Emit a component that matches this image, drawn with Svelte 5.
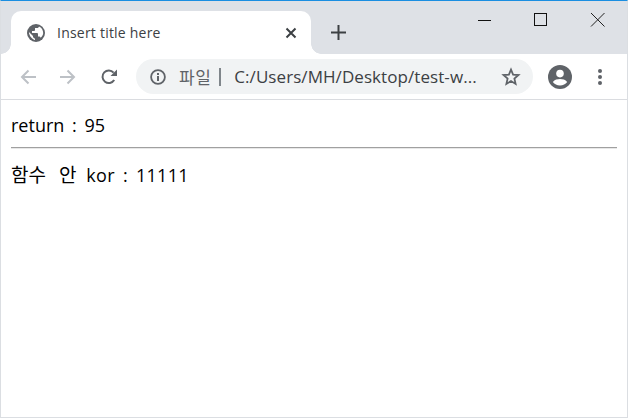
<script lang="ts">
	const url = 'C:/Users/MH/Desktop/test-w...';
</script>

<div class="window">
	<header class="titlebar">
		<div class="tab">
			<svg class="globe" viewBox="0 0 18 18" width="18" height="18">
				<circle cx="9" cy="9" r="9" fill="#5f6368" />
				<path d="M8 16 C5.5 15.5 2 12 1.9 8 L6 12 L6 13 C6 14 8 14 8 15 Z M13.6 13.8 C13.4 13.1 12.8 12.6 12 12.6 L11 12.6 L11 10 C11 9.5 10.5 9 10 9 L5 9 L5 7 L7 7 C7.5 7 8 6.5 8 6 L8 4 L10 4 C11 4 12 3 12 2.4 C14.5 3.4 16.2 6 16.2 9 C16.2 10.8 15.2 12.6 13.6 13.8 Z" fill="#fff" />
			</svg>
			<span class="tab-title">Insert title here</span>
			<svg class="tab-close" viewBox="0 0 12 12" width="12" height="12">
				<path d="M1.5 1.5 L10.5 10.5 M10.5 1.5 L1.5 10.5" stroke="#3c4043" stroke-width="2" fill="none" />
			</svg>
		</div>
		<svg class="new-tab" viewBox="0 0 15 15" width="15" height="15">
			<path d="M7.5 0 V15 M0 7.5 H15" stroke="#3c4043" stroke-width="2" fill="none" />
		</svg>
		<div class="win-controls">
			<svg viewBox="0 0 46 20" width="46" height="20"><path d="M17 10.5 H30" stroke="#111" fill="none" /></svg>
			<svg viewBox="0 0 46 20" width="46" height="20"><rect x="16.5" y="3.5" width="12" height="12" stroke="#111" fill="none" /></svg>
			<svg viewBox="0 0 46 20" width="46" height="20"><path d="M16 3 L29.5 16.5 M29.5 3 L16 16.5" stroke="#222" fill="none" /></svg>
		</div>
	</header>

	<nav class="toolbar">
		<svg class="nav-icon back" viewBox="0 0 16 16" width="16" height="16">
			<path d="M16 8 H2 M8.5 1.5 L2 8 L8.5 14.5" stroke="#bdc1c6" stroke-width="2" fill="none" />
		</svg>
		<svg class="nav-icon forward" viewBox="0 0 16 16" width="16" height="16">
			<path d="M0 8 H14 M7.5 1.5 L14 8 L7.5 14.5" stroke="#bdc1c6" stroke-width="2" fill="none" />
		</svg>
		<svg class="nav-icon reload" viewBox="0 0 16 16" width="16" height="16">
			<path d="M13.2 11 A6.3 6.3 0 1 1 12.6 3.6" stroke="#5f6368" stroke-width="2" fill="none" />
			<path d="M16 0.5 V7 H9.5 Z" fill="#5f6368" />
		</svg>
		<div class="omnibox">
			<svg class="info" viewBox="0 0 16 16" width="16" height="16">
				<circle cx="8" cy="8" r="6.9" stroke="#5f6368" stroke-width="1.8" fill="none" />
				<path d="M7 7 H9 V12 H7 Z M7 4 H9 V6 H7 Z" fill="#5f6368" />
			</svg>
			<span class="scheme">파일</span>
			<span class="divider"></span>
			<span class="url">{url}</span>
			<svg class="star" viewBox="0 0 20 20" width="20" height="20">
				<path d="M10 2.6 L12.1 7.6 L17.5 8 L13.4 11.6 L14.6 16.9 L10 14.1 L5.4 16.9 L6.6 11.6 L2.5 8 L7.9 7.6 Z" stroke="#5f6368" stroke-width="1.8" fill="none" />
			</svg>
		</div>
		<svg class="avatar" viewBox="0 0 24 24" width="24" height="24">
			<circle cx="12" cy="12" r="12" fill="#5f6368" />
			<circle cx="12" cy="8.6" r="3.8" fill="#fff" />
			<path d="M4.8 17 C6.5 14.6 9.5 14 12 14 C14.5 14 17.5 14.6 19.2 17 C17.5 19.2 15 20.4 12 20.4 C9 20.4 6.5 19.2 4.8 17 Z" fill="#fff" />
		</svg>
		<div class="menu"><i></i><i></i><i></i></div>
	</nav>

	<main class="page">
		<p class="first">return : 95</p>
		<hr />
		<p class="second"><span class="ko">함수 안</span> kor : 11111</p>
	</main>
</div>

<style>
	:global(body) {
		margin: 0;
		background: #fff;
	}

	.window {
		width: 628px;
		height: 418px;
		box-sizing: border-box;
		border: 1px solid #dbdee2;
		border-top: 1px solid #1a8ee1;
		display: flex;
		flex-direction: column;
		overflow: hidden;
		font-family: "Open Sans", "Noto Sans CJK KR", sans-serif;
	}

	.titlebar {
		height: 53px;
		flex: none;
		background: #dee1e6;
		display: flex;
		align-items: flex-end;
		padding-left: 10px;
		position: relative;
	}

	.tab {
		width: 300px;
		height: 43px;
		box-sizing: border-box;
		background: #fff;
		border-radius: 10px 10px 0 0;
		display: flex;
		align-items: center;
		padding: 0 14px 0 16px;
		position: relative;
	}

	.tab::before,
	.tab::after {
		content: '';
		position: absolute;
		bottom: 0;
		width: 10px;
		height: 10px;
		background: radial-gradient(circle at 0 0, #dee1e6 9.5px, #fff 10px);
	}

	.tab::before {
		left: -10px;
	}

	.tab::after {
		right: -10px;
		background: radial-gradient(circle at 100% 0, #dee1e6 9.5px, #fff 10px);
	}

	.tab-title {
		margin-left: 12px;
		flex: 1;
		font-size: 14px;
		color: #3c4043;
		letter-spacing: 0.22px;
	}

	.new-tab {
		margin: 0 0 14px 20px;
	}

	.win-controls {
		position: absolute;
		top: 9px;
		right: 6px;
		display: flex;
		gap: 11px;
	}

	.toolbar {
		height: 46px;
		flex: none;
		box-sizing: border-box;
		background: #fff;
		border-bottom: 1px solid #dadce0;
		display: flex;
		align-items: center;
		padding: 0 20px 0 19px;
	}

	.forward {
		margin-left: 24px;
	}

	.reload {
		margin-left: 25px;
	}

	.omnibox {
		margin-left: 19px;
		width: 397px;
		height: 35px;
		box-sizing: border-box;
		border-radius: 18px;
		background: #f1f3f4;
		display: flex;
		align-items: center;
		padding: 0 12px 0 14px;
		font-size: 17px;
	}

	.scheme {
		margin-left: 13px;
		color: #5f6368;
		letter-spacing: 0.5px;
	}

	.divider {
		width: 2px;
		height: 18px;
		background: #80868b;
		margin: 0 13px 0 8px;
	}

	.url {
		flex: 1;
		color: #3c4043;
		white-space: nowrap;
		letter-spacing: 0.07px;
	}

	.star {
		margin-left: -1px;
	}

	.avatar {
		margin-left: 15px;
	}

	.menu {
		margin-left: 26px;
		display: flex;
		flex-direction: column;
		gap: 2px;
	}

	.menu i {
		width: 4px;
		height: 4px;
		border-radius: 50%;
		background: #5f6368;
	}

	.page {
		flex: 1;
		padding: 11px 10px;
		color: #000;
		font-size: 18px;
		line-height: 28px;
	}

	.page p {
		margin: 0;
	}

	.first {
		word-spacing: 3px;
	}

	.second {
		word-spacing: 3px;
		letter-spacing: 0.3px;
	}

	.ko {
		word-spacing: 8px;
		font-size: 19px;
		letter-spacing: 0;
		margin-right: 2px;
	}

	hr {
		margin: 8px 0 12px;
		border: none;
		border-top: 1px solid #a0a0a0;
		border-bottom: 1px solid #e8e8e8;
	}
</style>
